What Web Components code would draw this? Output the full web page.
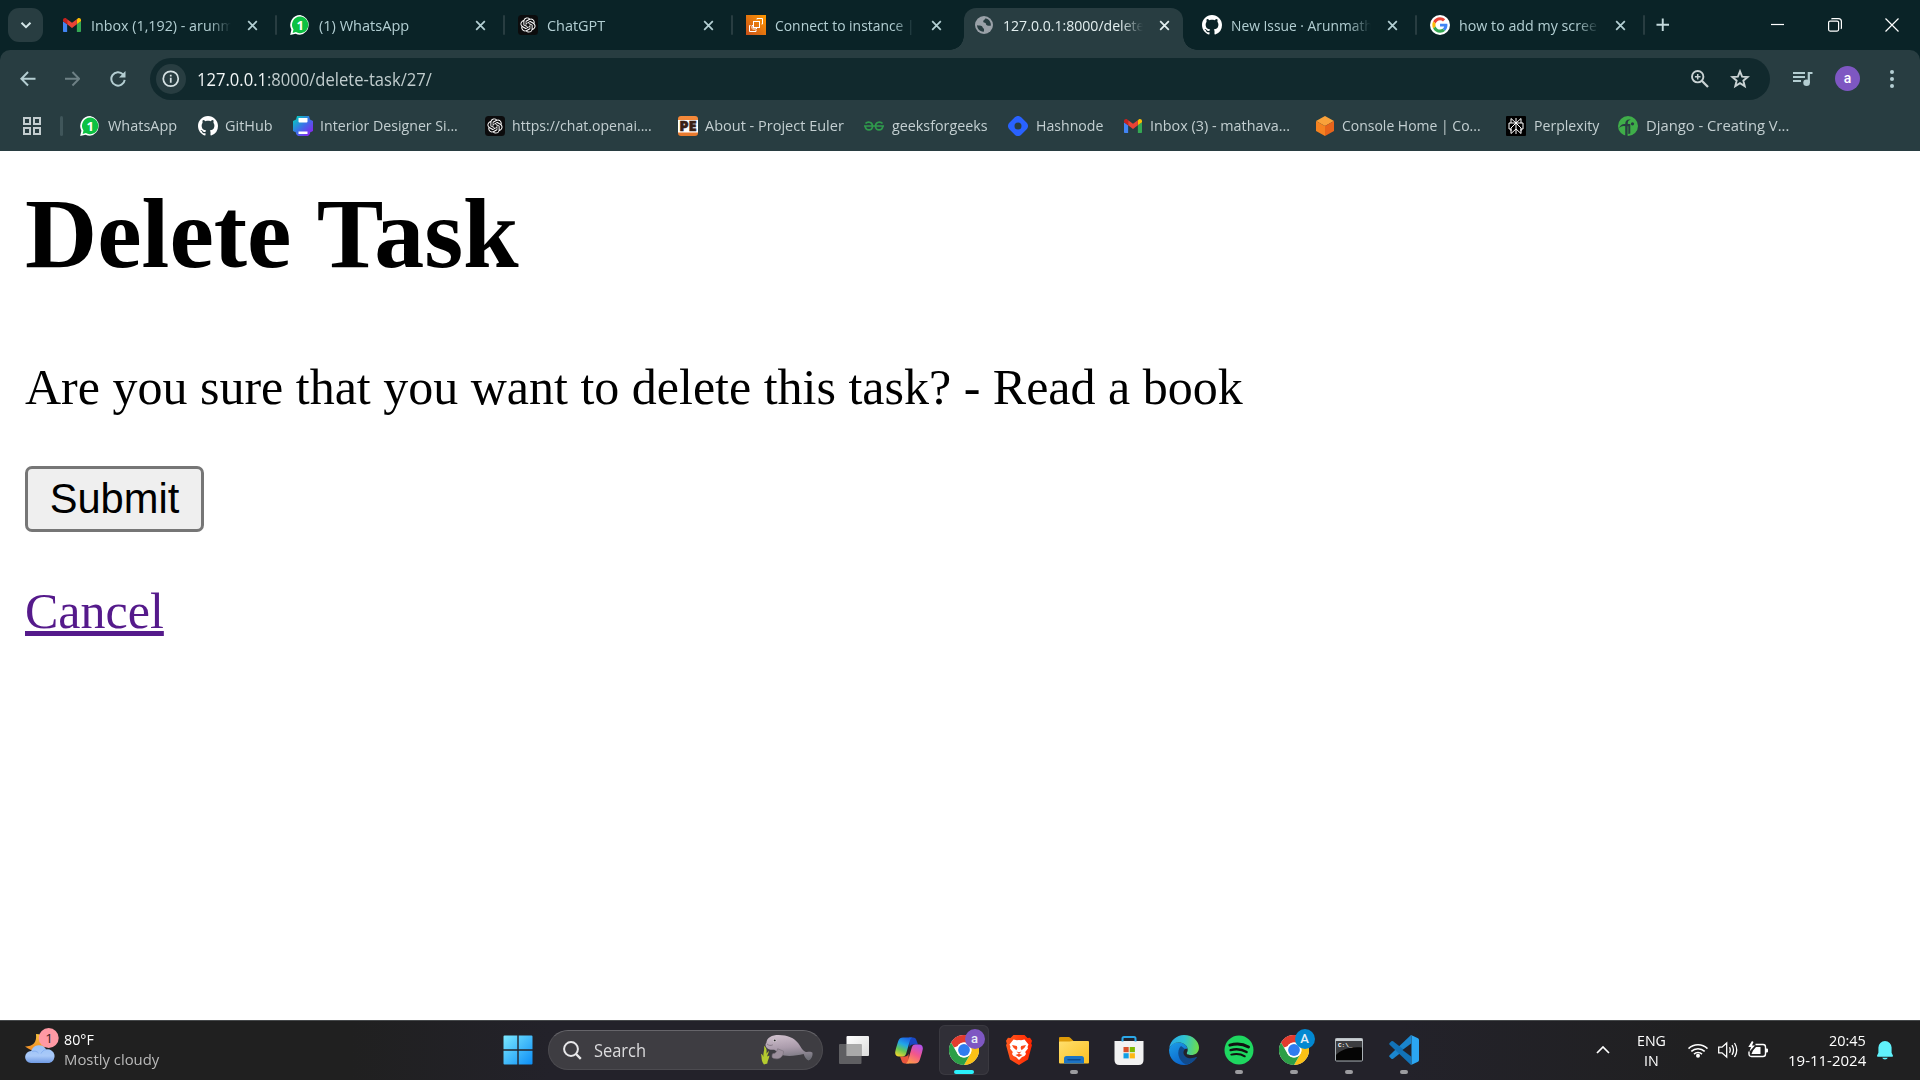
<!DOCTYPE html>
<html lang="en">
<head>
<meta charset="utf-8">
<title>Delete Task</title>
<style>
html,body{margin:0;height:100%;overflow:hidden;background:#fff}
body{font-family:"Open Sans","Noto Sans",sans-serif}
</style>
</head>
<body>
<desktop-screen></desktop-screen>
<script>
const GMAIL='<path fill="#4285f4" d="M1 17.5h3.6V9L0 5.6V16.4c0 .6.4 1.1 1 1.1z"/><path fill="#34a853" d="M15.4 17.5H19c.6 0 1-.5 1-1.1V5.6L15.4 9z"/><path fill="#fbbc04" d="M15.4 3.6V9L20 5.6V4.2c0-2-2.2-2.9-3.7-1.7z"/><path fill="#ea4335" d="M4.6 9V3.3L10 7.3l5.4-4V9L10 13z"/><path fill="#c5221f" d="M0 4.2v1.4L4.6 9V3.3l-.9-.8C2.200 1.300 0 2.200 0 4.200z"/>';
const OPENAI='M22.2819 9.8211a5.9847 5.9847 0 0 0-.5157-4.9108 6.0462 6.0462 0 0 0-6.5098-2.9A6.0651 6.0651 0 0 0 4.9807 4.1818a5.9847 5.9847 0 0 0-3.9977 2.9 6.0462 6.0462 0 0 0 .7427 7.0966 5.98 5.98 0 0 0 .511 4.9107 6.051 6.051 0 0 0 6.5146 2.9001A5.9847 5.9847 0 0 0 13.2599 24a6.0557 6.0557 0 0 0 5.7718-4.2058 5.9894 5.9894 0 0 0 3.9977-2.9001 6.0557 6.0557 0 0 0-.7475-7.0729zm-9.022 12.6081a4.4755 4.4755 0 0 1-2.8764-1.0408l.1419-.0804 4.7783-2.7582a.7948.7948 0 0 0 .3927-.6813v-6.7369l2.02 1.1686a.071.071 0 0 1 .038.052v5.5826a4.504 4.504 0 0 1-4.4945 4.4944zm-9.6607-4.1254a4.4708 4.4708 0 0 1-.5346-3.0137l.142.0852 4.783 2.7582a.7712.7712 0 0 0 .7806 0l5.8428-3.3685v2.3324a.0804.0804 0 0 1-.0332.0615L9.74 19.9502a4.4992 4.4992 0 0 1-6.1408-1.6464zM2.3408 7.8956a4.485 4.485 0 0 1 2.3655-1.9728V11.6a.7664.7664 0 0 0 .3879.6765l5.8144 3.3543-2.0201 1.1685a.0757.0757 0 0 1-.071 0l-4.8303-2.7865A4.504 4.504 0 0 1 2.3408 7.872zm16.5963 3.8558L13.1038 8.364 15.1192 7.2a.0757.0757 0 0 1 .071 0l4.8303 2.7913a4.4944 4.4944 0 0 1-.6765 8.1042v-5.6772a.79.79 0 0 0-.407-.667zm2.0107-3.0231l-.142-.0852-4.7735-2.7818a.7759.7759 0 0 0-.7854 0L9.409 9.2297V6.8974a.0662.0662 0 0 1 .0284-.0615l4.8303-2.7866a4.4992 4.4992 0 0 1 6.6802 4.66zM8.3065 12.863l-2.02-1.1638a.0804.0804 0 0 1-.038-.0567V6.0742a4.4992 4.4992 0 0 1 7.3757-3.4537l-.142.0805L8.704 5.459a.7948.7948 0 0 0-.3927.6813zm1.0976-2.3654l2.602-1.4998 2.6069 1.4998v2.9994l-2.5974 1.4997-2.6067-1.4997Z';
const CHROME='<circle cx="15" cy="15" r="15" fill="#fff"/><path fill="#e33b2e" d="M2 7.500A15 15 0 0 1 28 7.500H15a7.500 7.500 0 0 0-6.500 3.750L5 12.600z"/><path fill="#fbc116" d="M28 7.500A15 15 0 0 1 15 30l6.500-11.250A7.500 7.500 0 0 0 15 7.500z"/><path fill="#2c9f47" d="M15 30A15 15 0 0 1 2 7.500l6.500 11.250A7.500 7.500 0 0 0 21.500 18.750z"/><circle cx="15" cy="15" r="7.400" fill="#fff"/><circle cx="15" cy="15" r="5.900" fill="#2f7cf0"/>';
const ICONS={
 chevdown:[12,12,'<path d="M1.500 3.800 6 8.200 10.500 3.800" fill="none" stroke="#d4e6e8" stroke-width="2"/>'],
 gmail:[20,20,'<g transform="translate(1 1.200) scale(.9)">'+GMAIL+'</g>'],
 whatsapp:[20,20,'<path fill="#fff" d="M10.200 0A10 10 0 0 1 10 19.800 10 10 0 0 1 5.500 18.700L.2 20 1.400 14.800A10 10 0 0 1 10.200 0z"/><path fill="#0dc143" d="M10.200 1.600a8.300 8.300 0 1 1-4.300 15.500L2.600 18l.9-3.400A8.300 8.300 0 0 1 10.200 1.600z"/><text x="10.100" y="14.600" font-size="13" font-weight="700" font-family="Open Sans" fill="#fff" text-anchor="middle">1</text>'],
 openai:[20,20,'<rect width="20" height="20" rx="3.500" fill="#0c0c0d"/><path transform="translate(2.400 2.400) scale(.633)" fill="#fff" d="'+OPENAI+'"/>'],
 aws:[20,20,'<defs><linearGradient id="g" x1="0" y1="1" x2="1" y2="0"><stop stop-color="#c8511b"/><stop offset="1" stop-color="#f90"/></linearGradient></defs><rect width="20" height="20" fill="url(#g)"/><g fill="none" stroke="#fff" stroke-width="1"><rect x="7.500" y="6.500" width="6" height="6"/><path d="M11 4.500V3.500h5.500V9h-1M4.500 10.500h-1v6H10V15M6 13.500V10.500h1.500M10.500 12.500V14H6.500"/></g>'],
 globe:[20,20,'<circle cx="10" cy="10" r="9" fill="#9aa1a8"/><path fill="#283d41" d="M3 10.300c2 .3 3.600 0 5 1 1 .7.500 2.200 2 2.500v2.800C6 17 3.200 14 3 10.300zM11.500 3.200c-.2 1.500-2.300 1.700-2.300 3.300 0 1.200 1.500.8 2.300 1.500.8.900.3 2.200 1.800 2.500 1 .2 2 .3 3.500.2.600-3.300-1.800-6.700-5.300-7.500z"/>'],
 github:[16,16,'<path fill="#fff" d="M8 0C3.580 0 0 3.580 0 8c0 3.540 2.290 6.530 5.470 7.590.4.070.55-.17.55-.38 0-.19-.01-.82-.01-1.490-2.010.37-2.530-.49-2.690-.94-.09-.23-.48-.94-.82-1.130-.28-.15-.68-.52-.01-.53.63-.01 1.080.58 1.230.82.72 1.210 1.870.87 2.330.66.070-.52.28-.87.51-1.070-1.780-.2-3.640-.89-3.640-3.950 0-.87.31-1.590.82-2.150-.08-.2-.36-1.020.08-2.120 0 0 .67-.21 2.200.82.64-.18 1.320-.27 2-.27s1.360.09 2 .27c1.530-1.040 2.200-.82 2.200-.82.44 1.100.16 1.920.08 2.120.51.560.82 1.270.82 2.150 0 3.070-1.870 3.750-3.650 3.950.29.25.54.73.54 1.480 0 1.070-.01 1.930-.01 2.200 0 .21.15.46.55.38A8.010 8.010 0 0 0 16 8c0-4.420-3.580-8-8-8z"/>'],
 google:[20,20,'<circle cx="10" cy="10" r="10" fill="#fff"/><g transform="translate(2.300 2.200) scale(.322)"><path fill="#ea4335" d="M24 9.500c3.540 0 6.710 1.220 9.210 3.600l6.850-6.850C35.900 2.380 30.470 0 24 0 14.620 0 6.510 5.380 2.560 13.220l7.980 6.190C12.430 13.720 17.740 9.500 24 9.500z"/><path fill="#4285f4" d="M46.980 24.550c0-1.570-.15-3.090-.38-4.550H24v9.020h12.940c-.58 2.960-2.260 5.480-4.780 7.180l7.730 6c4.510-4.180 7.090-10.360 7.090-17.650z"/><path fill="#fbbc05" d="M10.530 28.590c-.48-1.450-.76-2.990-.76-4.590s.27-3.140.76-4.590l-7.980-6.190C.92 16.460 0 20.120 0 24s.92 7.540 2.560 10.780z"/><path fill="#34a853" d="M24 48c6.480 0 11.930-2.130 15.890-5.810l-7.730-6c-2.150 1.450-4.920 2.300-8.160 2.300-6.260 0-11.570-4.220-13.470-9.910l-7.980 6.190C6.510 42.620 14.620 48 24 48z"/></g>'],
 close:[12,12,'<path d="M1.300 1.300 10.700 10.700M10.700 1.300 1.300 10.700" stroke="currentColor" stroke-width="1.900"/>'],
 plus:[14,14,'<path d="M7 .5v13M.5 7h13" stroke="#c3d9dc" stroke-width="2"/>'],
 min:[14,14,'<path d="M0 6.500h13" stroke="#fff" stroke-width="1.200"/>'],
 restore:[14,14,'<rect x=".6" y="3.100" width="10" height="10" rx="1.500" fill="none" stroke="#fff" stroke-width="1.200"/><path d="M3.500 1.200c.2-.4.500-.6 1-.6h6c1.700 0 2.900 1.200 2.900 2.900v6.200c0 .5-.2.800-.6 1" fill="none" stroke="#fff" stroke-width="1.200"/>'],
 winclose:[14,14,'<path d="M.5.500 13.500 13.500M13.500.500.5 13.500" stroke="#fff" stroke-width="1.200"/>'],
 back:[16,16,'<path d="M16 8H1.800M8.300 1 1.400 8l6.900 7" fill="none" stroke="#b4ced2" stroke-width="2"/>'],
 forward:[16,16,'<path d="M0 8h14.200M7.700 1l6.900 7-6.900 7" fill="none" stroke="#6e8185" stroke-width="2"/>'],
 reload:[16,16,'<path d="M14.700 8.800A6.700 6.700 0 1 1 13 3.400L14.200 4.800" fill="none" stroke="#b4ced2" stroke-width="2"/><path d="M15.500 0v6.500H9z" fill="#b4ced2"/>'],
 info:[18,18,'<circle cx="9" cy="9" r="7.700" fill="none" stroke="#d5e1e3" stroke-width="1.800"/><path d="M9 8v5M9 4.800v1.800" stroke="#d5e1e3" stroke-width="1.800"/>'],
 zoom:[18,18,'<circle cx="6.700" cy="6.700" r="5.700" fill="none" stroke="#c9d2d3" stroke-width="1.900"/><path d="M10.800 10.800 17 17" stroke="#c9d2d3" stroke-width="2.300"/><path d="M6.700 3.900v5.600M3.900 6.700h5.600" stroke="#c9d2d3" stroke-width="1.500"/>'],
 star:[19,19,'<path d="M9.500 2.200l2 5 5.300.4-4.100 3.500 1.300 5.200-4.500-2.800L5 16.300l1.300-5.200L2.200 7.600l5.300-.4z" fill="none" stroke="#c9d2d3" stroke-width="1.800"/>'],
 queue:[20,16,'<path d="M0 2h12M0 6h12M0 10h8" stroke="#b4ced2" stroke-width="2"/><path d="M19.500 2h-3.700v10" fill="none" stroke="#b4ced2" stroke-width="2.200"/><circle cx="13.600" cy="11.700" r="3.300" fill="#b4ced2"/>'],
 dots:[6,18,'<g fill="#b4ced2"><circle cx="3" cy="2" r="2"/><circle cx="3" cy="9" r="2"/><circle cx="3" cy="16" r="2"/></g>'],
 grid:[18,18,'<g fill="none" stroke="#c3cdcf" stroke-width="2"><path d="M1 1h6v6H1zM11 1h6v6h-6zM1 11h6v6H1zM11 11h6v6h-6z"/></g>'],
 interior:[20,20,'<defs><linearGradient id="g" x1="0" y1="0" x2="1" y2="1"><stop offset=".1" stop-color="#08c6c0"/><stop offset=".5" stop-color="#3d6ee8"/><stop offset="1" stop-color="#9a12f0"/></linearGradient></defs><path fill="url(#g)" d="M4 0h12l1 3.500 3 1.500v10l-3 1.500V18l-2 2H5l-2-2v-1.500L0 15V5l3-1.500z"/><path fill="#fff" d="M5.500 2h9v3.600q0 1-1 1h-7q-1 0-1-1zM5.500 15.500h9v2.500h-9z"/>'],
 pe:[20,20,'<defs><linearGradient id="g" x1="0" y1="0" x2="0" y2="1"><stop stop-color="#f58a3a"/><stop offset="1" stop-color="#e8792d"/></linearGradient></defs><rect width="20" height="20" rx="3" fill="url(#g)"/><path fill="#fff" d="M0 4h20v12.500H0z"/><text x="10" y="15.300" font-size="13.500" font-weight="900" textLength="17.500" lengthAdjust="spacingAndGlyphs" font-family="Open Sans" fill="#3a2116" stroke="#3a2116" stroke-width=".5" text-anchor="middle">PE</text>'],
 gfg:[20,20,'<g fill="none" stroke="#2f9a4c" stroke-width="1.700"><path d="M0 10h20M1.500 7.500C3 5.700 8.500 5 8.500 10.200 8.500 15.500 1.500 15 1.200 10M18.500 7.500C17 5.700 11.500 5 11.500 10.200c0 5.300 7 4.800 7.300-.2"/></g>'],
 hashnode:[20,20,'<path fill="#2962ff" fill-rule="evenodd" d="M6.800 1.300a4.500 4.500 0 0 1 6.400 0l5.500 5.500a4.500 4.500 0 0 1 0 6.400l-5.500 5.500a4.500 4.500 0 0 1-6.400 0L1.300 13.200a4.500 4.500 0 0 1 0-6.400zM10 6.500a3.500 3.500 0 1 0 0 7 3.500 3.500 0 0 0 0-7z"/>'],
 cube:[20,20,'<path fill="#f9a13a" d="M10 0l9 5-9 5-9-5z"/><path fill="#f58220" d="M1 5l9 5v10l-9-5z"/><path fill="#e8641b" d="M19 5l-9 5v10l9-5z"/>'],
 perplexity:[20,20,'<rect width="20" height="20" rx="1" fill="#000"/><g fill="none" stroke="#fff" stroke-width="1"><path d="M10 2v16M5 7V2.500L10 7l5-4.500V7M3 7h14v6h-2v4.500L10 13l-5 4.500V13H3zM10 7l-5 5v3M10 7l5 5v3"/></g>'],
 django:[20,20,'<circle cx="10" cy="10" r="10" fill="#3fae49"/><path fill="#283d41" d="M7.200 20V10.200C5 9.600 3 10.200 1 12 2.500 8.500 4.500 7.700 7.200 8c.1-3.500 2-5 5.600-4.300-2.400.4-3.200 1.700-3 4.300h2.500v9.500l-2 .5v-7.800h-.7V20z"/><circle cx="14.500" cy="7.800" r="1.600" fill="#283d41"/>'],
 weather:[34,38,'<defs><linearGradient id="g" x1="0" y1="0" x2="0" y2="1"><stop stop-color="#9cc3f8"/><stop offset=".6" stop-color="#a9c9f8"/><stop offset="1" stop-color="#6f9ae4"/></linearGradient><linearGradient id="m" x1="0" y1="0" x2="0" y2="1"><stop stop-color="#f9c23c"/><stop offset="1" stop-color="#f08a24"/></linearGradient></defs><path fill="url(#m)" d="M11 6c8 0 12 5 9 12-3 5-12 7-20 .5 8 0 12-4 11-12.500z"/><path fill="url(#g)" d="M6 35a6 6 0 0 1 .2-12 8.200 8.200 0 0 1 15-1.500 6.800 6.800 0 1 1 3 13.500z"/><path d="M7 23.500c3-1 5 0 6.500 1.500M21.500 21.500c-3 .5-4.500 2-5.500 4" fill="none" stroke="#7fa9ee" stroke-width=".8"/><circle cx="23.700" cy="10" r="10" fill="#ff99a4"/><text x="24" y="15" font-size="13.500" font-family="Open Sans" fill="#3b1c1f" text-anchor="middle">1</text>'],
 windows:[30,30,'<defs><linearGradient id="g" gradientUnits="userSpaceOnUse" x1="0" y1="0" x2="30" y2="30"><stop stop-color="#7deaff"/><stop offset="1" stop-color="#0a8cf5"/></linearGradient></defs><path fill="url(#g)" d="M.5 1.500q0-1 1-1H14.300V14.300H.500zM15.700.500H28.500q1 0 1 1V14.300H15.700zM.500 15.700H14.300V29.500H1.500q-1 0-1-1zM15.700 15.700H29.500V28.500q0 1-1 1H15.700z"/>'],
 search:[19,19,'<circle cx="8" cy="8" r="6.900" fill="none" stroke="#e8e8ea" stroke-width="2"/><path d="M13 13l4.800 4.800" stroke="#e8e8ea" stroke-width="2.400"/>'],
 manatee:[54,32,'<defs><linearGradient id="g" x1=".3" y1="0" x2=".5" y2="1"><stop stop-color="#cdbecb"/><stop offset=".5" stop-color="#ab9cac"/><stop offset="1" stop-color="#6f7078"/></linearGradient></defs><path fill="#b5cc2f" d="M4 31C1 27 2 24 1 20c2 1 2 2 2.500 3.500C3 18 5 17 4 12c3 2 3 5 2.500 8L9 17c0 3-2 4-1.500 6L9.500 22c0 3-1.500 4-2 8z"/><path fill="url(#g)" d="M6.500 9C7 3.500 12 1 19 1c9 0 16 3 20 8.500 2.500 3.500 4 7 7 8.500 3 .8 5-1 7.500 1 .5 3-1 6.500-4 8-2.500-1-4-3-5-6.500-6 1.500-14 2.500-20 1.500-4-1-7-4.500-10-6-3 .5-6.500 0-8.500-3-.7-2-.3-3 .5-4z"/><path fill="#9c909d" stroke="#77707a" stroke-width=".6" d="M18 15c-1 4-3 5-5 5-1 1-1 4 0 4.500 6 2.500 11-1 11-7z"/><circle cx="15" cy="6.500" r="1.700" fill="#ded4dc"/><circle cx="15" cy="6.500" r="1" fill="#222"/><path d="M7 10c2 2 4 2 6 1" fill="none" stroke="#6e6270" stroke-width=".7"/>'],
 taskview:[30,28,'<defs><linearGradient id="g" x1="0" y1="0" x2="1" y2="1"><stop stop-color="#fff"/><stop offset="1" stop-color="#dcdcdc"/></linearGradient></defs><rect x="7.500" y="0" width="22.500" height="20" rx="1" fill="url(#g)"/><rect x="0" y="8" width="22.500" height="20" rx="1" fill="#6a6a6c" fill-opacity=".85"/><rect x="7.500" y="8" width="15" height="12" fill="#a9a9a9"/>'],
 copilot:[28,27,'<defs><linearGradient id="a" x1=".6" y1="0" x2=".2" y2="1"><stop stop-color="#1c66e6"/><stop offset=".35" stop-color="#22a6e8"/><stop offset=".65" stop-color="#63c755"/><stop offset="1" stop-color="#f4d52c"/></linearGradient><linearGradient id="b" x1=".8" y1="0" x2=".3" y2="1"><stop stop-color="#b052ee"/><stop offset=".5" stop-color="#f2568c"/><stop offset="1" stop-color="#ff9a4c"/></linearGradient></defs><path fill="#1947c4" d="M14 .5h4c2 0 3 1 3.500 3L23 7.500h-5c-2 0-3 1-3.500 3z"/><path fill="#e9563d" d="M14 26.500h-4c-2 0-3-1-3.500-3L5 19.500h5c2 0 3-1 3.500-3z"/><path fill="url(#a)" d="M8 .5h9.500c-1.500.500-2.200 1.500-2.700 3.500l-3.600 12.500c-.6 2-1.700 3-3.700 3H4c-3 0-4.300-2-3.700-5C1.200 10 2.500 6.500 3.500 3.500 4.200 1.500 5.800.500 8 .5z"/><path fill="url(#b)" d="M20 26.500h-9.500c1.500-.5 2.200-1.500 2.700-3.500l3.600-12.500c.6-2 1.700-3 3.700-3H24c3 0 4.300 2 3.700 5-.9 4.500-2.200 8-3.200 11-.7 2-2.300 3-4.500 3z"/>'],
 chrome:[30,30,CHROME],
 brave:[26,30,'<defs><linearGradient id="g"><stop stop-color="#ff5a1f"/><stop offset="1" stop-color="#ff2500"/></linearGradient></defs><path fill="url(#g)" d="M7.500 0h11l3 3L24 2.700l2 3-.8 3L26 10l-4 14.500L13 30 4 24.500 0 10l.8-1.300-.8-3 2-3L4.500 3z"/><path fill="#fff" d="M7.500 4.500l3.500.8L13 5l2 .3 3.500-.8 4 5-1 2.500.5 1.500-2.800 3.500.8 2-1.500 2-2.500 1L13 25 10 22l-2.500-1-1.500-2 .8-2L4 13.500l.5-1.500-1-2.500z"/><path fill="#fb4a1a" d="M6 10l4.800 1 .6 2-1 2.300L7.300 12.500zM20 10l-4.800 1-.6 2 1 2.300 3.100-2.800zM10.500 16.500l2.500.8 2.500-.8-2.500 2.500zM9.500 20l3.500-1.300 3.500 1.300-3.500 2z"/>'],
 folder:[30,27,'<defs><linearGradient id="g" x1="0" y1="0" x2="1" y2="1"><stop stop-color="#ffdf6d"/><stop offset="1" stop-color="#fbc022"/></linearGradient></defs><path fill="#dd9a08" d="M0 1.500Q0 0 1.500 0h8q1 0 2 1l3 3v6H0z"/><path fill="url(#g)" d="M0 8V5q0-1 1-1h28q1 0 1 1v20.500q0 1-1 1H1q-1 0-1-1z"/><path fill="#dd9a08" d="M0 4.500h10.500l3-.5-3.500-3.500H0z"/><path fill="#1d74c4" d="M5 26.500V21.500q0-2.500 2.500-2.500h15q2.500 0 2.500 2.500v5z"/><path d="M9 22.800h12" stroke="#0c4c91" stroke-width="1.500" stroke-linecap="round"/>'],
 store:[30,30,'<path fill="#f2f2f2" d="M.5 6h29v19q0 5-5 5h-19q-5 0-5-5z"/><path d="M8.500 6.500V3.500Q8.500 2 10 2h10q1.500 0 1.500 1.500V6.500" fill="none" stroke="#2ba8e8" stroke-width="2"/><path fill="#d8512a" d="M9.500 12h5.200v5.200H9.500z"/><path fill="#7eb900" d="M15.700 12h5.200v5.200h-5.200z"/><path fill="#119fe6" d="M9.500 18.200h5.200v5.200H9.500z"/><path fill="#fcb813" d="M15.700 18.200h5.200v5.200h-5.200z"/>'],
 edge:[30,30,'<defs><linearGradient id="a" x1="0" y1=".3" x2="1" y2=".4"><stop stop-color="#28a8ea"/><stop offset=".5" stop-color="#2fc3d0"/><stop offset="1" stop-color="#6edd4a"/></linearGradient><linearGradient id="b" x1="0" y1="0" x2=".6" y2="1"><stop stop-color="#1b9de8"/><stop offset="1" stop-color="#0b62c8"/></linearGradient></defs><path fill="url(#b)" d="M0 15C1 9 7 6.500 13 8c3 1 5 3 5.500 6-3-1-5.500 1-5.500 4 0 5 4 8 9 8 1 0 2-.2 3-.6C22 28.500 18.500 30 15 30 6.500 30 0 23.500 0 15z"/><path fill="#114a8b" d="M12 11c-5 5-3 15 5 18.500 4-.5 8-2.500 10.800-6.700.3-.6-.2-1-.8-.7-3 1.600-9 1.900-11-1.100-2.500-3-1.500-5 0-7z"/><path fill="url(#a)" d="M.2 13C1.500 5.500 7.500 0 15 0c9 0 15 6.500 15 12.500 0 5-3.500 7.500-8 7.500-2.500 0-5-.8-4-2.500 2-3 0-8-5-9.500C8 6.500 3 8.500.2 13z"/>'],
 spotify:[30,30,'<circle cx="15" cy="15" r="14.500" fill="#1ed760"/><g fill="none" stroke="#111" stroke-linecap="round"><path d="M5.800 10.200c6-1.800 13.500-1.200 18.700 1.900" stroke-width="2.900"/><path d="M6.600 15.100c5.300-1.500 11.500-.8 16 2" stroke-width="2.400"/><path d="M7.300 19.600c4.700-1.100 9.700-.7 13.500 1.700" stroke-width="2"/></g>'],
 terminal:[28,24,'<rect x=".5" y=".5" width="27" height="22.500" rx="1" fill="#050505" stroke="#aab1b6"/><path fill="#c9ced2" d="M.5.500h27v2.800H.500z"/><path fill="#3c3d40" d="M1 3.500h26v6C16 8 5 12 1 17z"/><text x="3" y="9" font-size="6" font-weight="700" font-family="Liberation Mono" fill="#fff">C:\\_</text>'],
 vscode:[30,30,'<path fill="#1a86cf" d="M22 0L.6 20.300q-.8.900 0 1.800l1.800 1.600q.8.600 1.700 0L22 9.800z"/><path fill="#1273b8" d="M22 30L.6 9.700q-.8-.9 0-1.800l1.800-1.600q.8-.6 1.700 0L22 20.200z"/><path fill="#2ba6f2" d="M22 0l7 3.300q1 .5 1 1.700v20q0 1.200-1 1.700L22 30q.4-.5.400-1.500V1.500Q22.400.500 22 0z"/><path fill="#22222a" d="M22.100 8.500V21.500L13.500 15z"/>'],
 up:[14,8,'<path d="M1 7l6-6 6 6" fill="none" stroke="#fff" stroke-width="1.700"/>'],
 wifi:[20,15,'<g fill="none" stroke="#fff" stroke-width="1.500"><path d="M.5 5.600a13.500 13.500 0 0 1 19 0M3.300 8.400a9.500 9.500 0 0 1 13.400 0M6 11.100a5.700 5.700 0 0 1 8 0"/></g><circle cx="10" cy="12.800" r="2" fill="#fff"/>'],
 speaker:[20,18,'<g fill="none" stroke="#fff" stroke-width="1.300"><path d="M.7 6.200h3.300l4.700-4.300v14.200L4 11.800H.7zM11.500 6.300q1.500 2.700 0 5.400M14 4.200q3 4.800 0 9.600M16.500 2q4.500 7 0 14"/></g>'],
 battery:[20,18,'<path d="M7.500 3.500h7.500q2.500 0 2.500 2.500v7q0 2.500-2.500 2.500H3.500q-2.500 0-2.500-2.500V10.500" fill="none" stroke="#fff" stroke-width="1.400"/><path fill="#fff" d="M18 7.500h1q1 0 1 1v2q0 1-1 1h-1zM5 9.500L8 6h4.500v7H3.500zM4 0L.3 6H3L1.500 10.500 7 4.500H4L5.500 1z"/>'],
 bell:[16,19,'<path fill="#60f2fb" d="M8 0a6.600 6.600 0 0 1 6.600 6.600v5.200L16 14.800q.1.900-.8.900H.800q-.9 0-.8-.9l1.400-3V6.600A6.600 6.600 0 0 1 8 0zM5.200 16.700h5.600a2.900 2.300 0 0 1-5.600 0z"/>']
};

/* Base class: attaches an open root and fills it from html(). */
class Base extends HTMLElement{
 connectedCallback(){
  if(this.shadowRoot)return;
  this.attachShadow({mode:'open'}).innerHTML=this.html();
  this.ready&&this.ready();
 }
}
/* <ui-icon name size h> inline SVG by name */
customElements.define('ui-icon',class extends Base{
 html(){
  const [w,h,m]=ICONS[this.getAttribute('name')];
  const s=+this.getAttribute('size')||w;
  return `<style>:host{display:block;flex:none;width:${s}px;height:${s*h/w}px}svg{display:block;width:100%;height:100%}</style><svg viewBox="0 0 ${w} ${h}">${m}</svg>`;
 }
});
/* <fit-text w> one line of text condensed or widened to w pixels */
customElements.define('fit-text',class extends Base{
 html(){return `<style>:host{display:block;flex:none;width:${this.getAttribute('w')}px;white-space:pre}span{display:inline-block;transform-origin:0 50%}</style><span><slot></slot></span>`}
 ready(){
  const s=this.shadowRoot.querySelector('span');
  s.style.transform=`scaleX(${+this.getAttribute('w')/s.offsetWidth})`;
 }
});
customElements.define('browser-tab',class extends Base{
 html(){
  const on=this.hasAttribute('active');
  return `<style>
  :host{display:flex;flex:none;width:228px;height:50px;box-sizing:border-box;padding-top:7.500px;font-size:15.200px;line-height:22px;color:${on?'#e3eff0':'#b3cfd3'}}
  .body{display:flex;align-items:center;width:219px;height:42.500px;box-sizing:border-box;padding:0 0 7px 10px;position:relative}
  .on{background:#283d41;border-radius:12px 12px 0 0}
  .on:before,.on:after{content:"";position:absolute;bottom:0;width:14px;height:14px}
  .on:before{left:-14px;background:radial-gradient(circle at 0 0,transparent 13.500px,#283d41 14px)}
  .on:after{right:-14px;background:radial-gradient(circle at 100% 0,transparent 13.500px,#283d41 14px)}
  .t{margin-left:9.700px;width:143px;overflow:hidden;-webkit-mask-image:linear-gradient(90deg,#000 118px,transparent 140px)}
  ui-icon.c{margin-left:12.500px;width:11px}
  .sep{width:2.500px;height:20px;margin:7.500px 0 0 4.300px;border-radius:2px;background:#283d41}
  </style><div class="body ${on?'on':''}"><ui-icon name="${this.getAttribute('icon')}" size="20"></ui-icon><div class="t"><fit-text w="${this.getAttribute('w')}">${this.getAttribute('label')}</fit-text></div><ui-icon class="c" name="close" size="11"></ui-icon></div>${this.hasAttribute('sep')?'<div class="sep"></div>':''}`;
 }
});
customElements.define('tab-strip',class extends Base{
 html(){return `<style>
 :host{display:flex;height:50px;background:#0a2327}
 .find{width:35px;height:34px;margin:8px 8.500px 0 8px;border-radius:11px;background:#283d41;display:flex;align-items:center;justify-content:center}
 .new{margin:18px 0 0 8.700px}
 .win{margin-left:auto;display:flex;gap:43px;padding:17.500px 21.500px 0 0}
 </style><div class="find"><ui-icon name="chevdown"></ui-icon></div>
 <browser-tab icon="gmail" w="143" label="Inbox (1,192) - arunm" sep></browser-tab>
 <browser-tab icon="whatsapp" w="90" label="(1) WhatsApp" sep></browser-tab>
 <browser-tab icon="openai" w="58" label="ChatGPT" sep></browser-tab>
 <browser-tab icon="aws" w="140" label="Connect to instance |"></browser-tab>
 <browser-tab icon="globe" w="142" label="127.0.0.1:8000/delete" active></browser-tab>
 <browser-tab icon="github" w="142" label="New Issue · Arunmath" sep></browser-tab>
 <browser-tab icon="google" w="138" label="how to add my scree" sep></browser-tab>
 <ui-icon class="new" name="plus" size="13.500"></ui-icon>
 <div class="win"><ui-icon name="min" size="14"></ui-icon><ui-icon name="restore" size="14"></ui-icon><ui-icon name="winclose" size="14"></ui-icon></div>`}
});
customElements.define('address-bar',class extends Base{
 html(){return `<style>
 :host{display:flex;align-items:center;height:58px;box-sizing:border-box;padding:0 24.500px 0 20px}
 .box{display:flex;align-items:center;flex:none;width:1620px;height:42px;border-radius:21px;background:#11292d;margin-left:24.500px;box-sizing:border-box;padding:0 20px 0 6px}
 .i{width:30px;height:30px;border-radius:50%;background:#283d41;display:flex;align-items:center;justify-content:center;margin-right:10.500px}
 fit-text{font-size:18px;line-height:24px;color:#c0cccd}b{font-weight:400;color:#f2f6f6}
 .av{width:25px;height:25px;border-radius:50%;background:#7e57c2;color:#fff;font:500 14px/24px Roboto,sans-serif;text-align:center;margin:-1px 29px 0 22px}
 </style><ui-icon name="back" size="15.500"></ui-icon><ui-icon name="forward" size="15.500" style="margin-left:29px"></ui-icon><ui-icon name="reload" size="16" style="margin-left:29.500px"></ui-icon>
 <div class="box"><div class="i"><ui-icon name="info" size="17.500"></ui-icon></div><fit-text w="235"><b>127.0.0.1</b>:8000/delete-task/27/</fit-text>
 <ui-icon name="zoom" size="18" style="margin-left:auto"></ui-icon><ui-icon name="star" size="20" style="margin-left:21.500px"></ui-icon></div>
 <ui-icon name="queue" size="20" style="margin-left:23px"></ui-icon><div class="av">a</div><ui-icon name="dots" size="6"></ui-icon>`}
});
customElements.define('bookmark-item',class extends Base{
 html(){return `<style>:host{display:flex;align-items:center;gap:7.500px;font-size:15.200px;line-height:22px;color:#c3cfd1}fit-text{margin-top:-1.500px}</style><ui-icon name="${this.getAttribute('icon')}" size="20"></ui-icon><fit-text w="${this.getAttribute('w')}"><slot></slot></fit-text>`}
});
customElements.define('bookmarks-bar',class extends Base{
 html(){
  const L=[['whatsapp',69.500,'WhatsApp',17.500],['github',47.500,'GitHub',20.500],['interior',138,'Interior Designer Si...',20],['openai',140,'https://chat.openai....',26.500],['pe',138.500,'About - Project Euler',25.500],['gfg',96,'geeksforgeeks',20.500],['hashnode',67,'Hashnode',20.500],['gmail',140,'Inbox (3) - mathava...',20],['cube',139,'Console Home | Co...',24.500],['perplexity',65,'Perplexity',25],['django',143,'Django - Creating V...',19.500]];
  return `<style>:host{display:flex;align-items:center;height:43px;box-sizing:border-box;padding:0 0 7px 23px}.s{width:2.500px;height:20px;margin-left:19px;border-radius:2px;background:#40565a}</style><ui-icon name="grid" size="18"></ui-icon><div class="s"></div>`+L.map(b=>`<bookmark-item icon="${b[0]}" w="${b[1]}" style="margin-left:${b[3]}px">${b[2]}</bookmark-item>`).join('');
 }
});
customElements.define('browser-chrome',class extends Base{
 html(){return `<style>:host{display:block;height:151px;background:#0a2327}.p{height:101px;background:#283d41;border-radius:10px 10px 0 0}</style><tab-strip></tab-strip><div class="p"><address-bar></address-bar><bookmarks-bar></bookmarks-bar></div>`}
});
customElements.define('task-page',class extends Base{
 html(){return `<style>
 :host{display:block;flex:1;background:#fff;color:#000;font:50px/58px "Liberation Serif",serif;padding:25px 25px 0;box-sizing:border-box}
 h1{font-size:100px;line-height:115px;margin:0 0 67px;word-spacing:2px}
 p{margin:0 0 50px}
 button{display:block;width:179px;height:66px;box-sizing:border-box;border:3px solid #767676;border-radius:7px;background:#efefef;color:#000;font:41.667px "Liberation Sans",sans-serif;padding:0;margin:0 0 50px}
 a{color:#551a8b;text-decoration:underline;text-decoration-thickness:5px;text-underline-offset:3px;text-decoration-skip-ink:none}
 </style><h1>Delete Task</h1><p>Are you sure that you want to delete this task? - Read a book</p><button>Submit</button><a>Cancel</a>`}
});
customElements.define('task-button',class extends Base{
 html(){
  const b=this.getAttribute('badge'),r=this.getAttribute('run');
  return `<style>
  :host{display:flex;flex:none;width:50px;height:50px;margin-right:5px;margin-bottom:1px;box-sizing:border-box;align-items:center;justify-content:center;position:relative;border-radius:6px;${r==='active'?'background:#302f37;box-shadow:inset 0 0 0 1px #3a3940':''}}
  .b{position:absolute;left:26px;top:4px;width:20px;height:20px;border-radius:50%;background:${this.getAttribute('color')};color:#e6eef6;font:500 13px/20px Roboto,sans-serif;text-align:center}
  .r{position:absolute;bottom:1px;left:50%;transform:translateX(-50%);height:4px;border-radius:2px;width:${r==='active'?20:8}px;background:${r==='active'?'#2bf0fb':'#9c9ca0'}}
  </style><ui-icon name="${this.getAttribute('icon')}"></ui-icon>${b?`<div class="b">${b}</div>`:''}${r?'<div class="r"></div>':''}`;
 }
});
customElements.define('task-bar',class extends Base{
 html(){return `<style>
 :host{display:flex;height:60px;box-sizing:border-box;border-top:1px solid #45484a;background:linear-gradient(90deg,#202020 0,#202020 350px,#23222a 550px,#23222a 1400px,#202021 1700px);color:#fff;font-size:15.200px;line-height:20px;align-items:center}
 .w{display:flex;width:468px;padding-left:25px;gap:5px;height:59px;box-sizing:border-box}
 .w>ui-icon{margin-top:7px}.w>div{margin-top:7.500px}
 .g{color:#b9b9b9}
 .s{display:flex;align-items:center;width:275px;height:40px;box-sizing:border-box;border-radius:20px;background:#3e3d42;border:1px solid #4c4b50;border-top-color:#66656a;margin:0 6px 1px 0;padding:0 9px 0 14px;flex:none}
 .s fit-text{font-size:18px;line-height:24px;margin-left:12px;color:#dcdcde}
 .tray{display:flex;align-items:center;margin-left:auto;padding-right:27px;height:58px;margin-bottom:1px}
 .c{display:flex;flex-direction:column;align-items:center;margin:0 0 1px}
 .r{align-items:flex-end}
 </style>
 <div class="w"><ui-icon name="weather" size="34"></ui-icon><div><fit-text w="30">80°F</fit-text><fit-text class="g" w="95">Mostly cloudy</fit-text></div></div>
 <task-button icon="windows" style="margin-left:24.500px"></task-button>
 <div class="s"><ui-icon name="search" size="19"></ui-icon><fit-text w="52">Search</fit-text><ui-icon name="manatee" size="53" style="margin-left:auto"></ui-icon></div>
 <task-button icon="taskview"></task-button><task-button icon="copilot"></task-button>
 <task-button icon="chrome" badge="a" color="#7e57c2" run="active"></task-button>
 <task-button icon="brave"></task-button><task-button icon="folder" run="1"></task-button><task-button icon="store"></task-button><task-button icon="edge"></task-button><task-button icon="spotify" run="1"></task-button>
 <task-button icon="chrome" badge="A" color="#0288d1" run="1"></task-button><task-button icon="terminal" run="1"></task-button><task-button icon="vscode" run="1"></task-button>
 <div class="tray"><ui-icon name="up" size="14"></ui-icon>
 <div class="c" style="margin-left:27px"><fit-text w="29">ENG</fit-text><fit-text w="15">IN</fit-text></div>
 <ui-icon name="wifi" size="20" style="margin-left:22px"></ui-icon><ui-icon name="speaker" size="20" style="margin-left:10px"></ui-icon><ui-icon name="battery" size="20" style="margin-left:10px"></ui-icon>
 <div class="c r" style="margin-left:20px"><fit-text w="37">20:45</fit-text><fit-text w="78">19-11-2024</fit-text></div>
 <ui-icon name="bell" size="16" style="margin-left:11px"></ui-icon></div>`}
});
customElements.define('desktop-screen',class extends Base{
 html(){return `<style>:host{display:flex;flex-direction:column;width:1920px;height:1080px;overflow:hidden}</style><browser-chrome></browser-chrome><task-page></task-page><task-bar></task-bar>`}
});
</script>
</body>
</html>
